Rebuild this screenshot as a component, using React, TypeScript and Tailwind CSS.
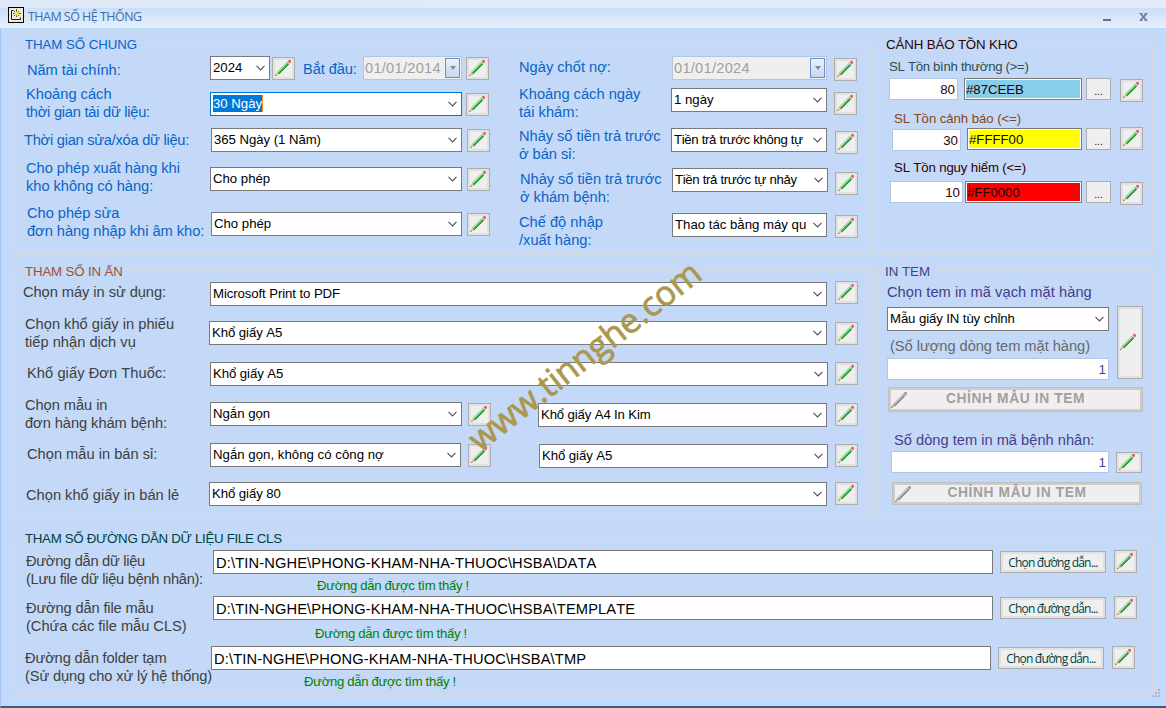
import React from 'react';
import clsx from 'clsx';

type BoxProps = { className?: string; children?: React.ReactNode };

/* Group box with its caption sitting on the top border */
function Group({ title, color, className, children }: BoxProps & { title: string; color: string }) {
  return (
    <fieldset className={clsx('min-w-0 border border-[#d6dbe2]', className)}>
      <legend className={clsx('h-[17px] px-[3px] pt-[2px] text-[13.3px] leading-[15px] whitespace-nowrap', color)}>
        {title}
      </legend>
      {children}
    </fieldset>
  );
}

function Label({ className, children }: BoxProps) {
  return (
    <div className={clsx('shrink-0 whitespace-pre text-[14.67px] leading-[18px]', className)}>{children}</div>
  );
}

function Pencil({ disabled = false }: { disabled?: boolean }) {
  return (
    <svg width="16" height="16" viewBox="0 0 16 16" className="shrink-0">
      <path d="M1.8 12 11.8 2l2.2 2.2-10 10z" fill={disabled ? '#a2a2a2' : '#45b84c'} />
      <path d="M1.8 12 11.8 2l.9.9-10 10z" fill={disabled ? '#cdcdcd' : '#b4e4b4'} />
      <path d="M3.4 13.6 13.4 3.6l.6.6-10 10z" fill={disabled ? '#828282' : '#23882f'} />
      <path d="M11.8 2 12.8 1 15 3.2l-1 1z" fill={disabled ? '#acacac' : '#bcc2c6'} />
      <path d="M12.8 1 13.8 0h1.4l.8.8v1.4l-1 1z" fill={disabled ? '#9a9a9a' : '#dd5c5c'} />
      <path d="M1.8 12 4 14.2.6 15.6z" fill={disabled ? '#a6a6a6' : '#e0ba80'} />
      <path d="M0 16 .8 14.4l1 1z" fill="#4a4a4a" />
    </svg>
  );
}

function EditButton({ className }: BoxProps) {
  return (
    <button
      className={clsx(
        'flex shrink-0 items-center border border-[#adadad] bg-[#efefef] pb-px pl-[2px] shadow-[inset_0_0_0_2px_#e1e1e1]',
        className,
      )}
    >
      <Pencil />
    </button>
  );
}

/* Default square edit button, only the margins change */
function Edit({ className }: BoxProps) {
  return <EditButton className={clsx('h-[23px] w-[23px]', className)} />;
}

function Combo({ className, border = 'border-[#7a7a7a]', children }: BoxProps & { border?: string }) {
  return (
    <div className={clsx('flex h-[24px] shrink-0 items-center border bg-white pr-[4px] pl-[2px] text-[13.2px] leading-[17px] text-black', border, className)}>
      <span className="mb-[2px] min-w-0 flex-1 overflow-hidden whitespace-nowrap">{children}</span>
      <svg width="9" height="6" viewBox="0 0 9 6" className="ml-[4px] shrink-0">
        <path d="M.5 .9 4.5 4.9 8.5 .9" fill="none" stroke="#505050" strokeWidth="1.1" />
      </svg>
    </div>
  );
}

function DateBox({ className, children }: BoxProps) {
  return (
    <div className={clsx('flex h-[24px] shrink-0 items-center border border-[#b1c6e3] bg-[#efefef] pr-px pl-[1px] text-[14.67px] tracking-[0.25px] text-[#a0a0a0]', className)}>
      <span className="flex-1">{children}</span>
      <span className="flex h-[20px] w-[15px] items-center justify-center border border-[#6d8fc2] bg-linear-to-b from-[#e9f1fc] to-[#c5d8f2]">
        <svg width="6" height="4" viewBox="0 0 6 4">
          <path d="M0 0h6L3 4z" fill="#8a8a8a" />
        </svg>
      </span>
    </div>
  );
}

function NumberBox({ className, children }: BoxProps) {
  return (
    <div className={clsx('h-[22px] shrink-0 border border-[#b1c6e3] bg-white pr-[2px] text-right text-[13.33px] leading-[21px]', className)}>
      {children}
    </div>
  );
}

function ColorBox({ className, children }: BoxProps) {
  return (
    <div className={clsx('h-[22px] shrink-0 border border-[#7a7a7a] pl-[1px] text-[13.2px] leading-[21px] text-[#200000] shadow-[inset_0_0_0_1px_#fff]', className)}>
      {children}
    </div>
  );
}

function MoreButton({ className }: BoxProps) {
  return (
    <button className={clsx('h-[22px] w-[25px] shrink-0 border border-[#adadad] bg-[#efefef] pt-[3px] text-[11px] leading-[16px] tracking-[-0.2px] text-[#400000]', className)}>
      ...
    </button>
  );
}

function TemplateButton({ className }: BoxProps) {
  return (
    <button className={clsx('flex shrink-0 items-center border border-[#bfbfbf] bg-[#efefef] pl-[2px] shadow-[inset_0_0_0_2px_#cccccc]', className)}>
      <Pencil disabled />
      <span className="flex-1 pr-[18px] text-center text-[13.8px] font-bold tracking-[0.6px] whitespace-nowrap text-[#a0a0a0]">
        CHỈNH MẪU IN TEM
      </span>
    </button>
  );
}

function PathRow({ label, path, className, labelClass, noteClass }: { label: React.ReactNode; path: string; className: string; labelClass: string; noteClass: string }) {
  return (
    <div className={clsx('flex items-start', className)}>
      <Label className={labelClass}>{label}</Label>
      <div className="w-[780px] shrink-0">
        <div className="h-[24px] border border-[#7a7a7a] bg-white pt-[2px] pl-[2px] text-[14.67px] leading-[21px] tracking-[0.14px] text-black">
          {path}
        </div>
        <div className={clsx('text-[13.1px] leading-[16px] tracking-[-0.29px] text-[#008000]', noteClass)}>Đường dẫn được tìm thấy !</div>
      </div>
      <button className="mt-px ml-[7px] h-[22px] w-[106px] shrink-0 border border-[#adadad] bg-[#efefef] font-['Open_Sans',sans-serif] text-[12px] leading-[17px] tracking-[-0.8px] whitespace-nowrap text-[#004040] shadow-[inset_0_0_0_2px_#e1e1e1]">
        Chọn đường dẫn...
      </button>
      <Edit className="ml-[8px]" />
    </div>
  );
}

function TitleBar() {
  return (
    <header className="flex h-[29px] shrink-0 flex-col border-b border-[#b6d9ef]">
      <div className="h-[8px] bg-linear-to-r from-[#dfe9f7] to-[#e3ebf8]" />
      <div className="flex h-[20px] items-start bg-linear-to-b from-[#cbdff8] to-[#e4f0fe] pl-[8px]">
        <svg width="16" height="16" viewBox="0 0 16 16" className="-mt-px">
          <rect x=".5" y=".5" width="15" height="15" fill="#efe9d9" stroke="#000" />
          <path d="M5.5 3.5h-2v9h9v-2" fill="none" stroke="#14144e" />
          <path d="M8.5 2v8M5 6.5h8M6 4l5 5M11 4 6 9" stroke="#4a4720" strokeWidth=".9" />
          <circle cx="8.7" cy="6.5" r="2.1" fill="#f3ea2c" />
        </svg>
        <h1 className="ml-[4px] flex-1 font-['Open_Sans',sans-serif] text-[12.5px] leading-[17px] tracking-[-0.53px] text-[#3e6aaa]">
          THAM SỐ HỆ THỐNG
        </h1>
        <svg width="48" height="12" viewBox="0 0 48 12" className="mt-[3px] mr-[17px]">
          <path d="M2 8h8v2H2z" fill="#64748b" />
          <path d="M39.5 2.5 45.5 9.5M45.5 2.5 39.5 9.5" stroke="#6b7c97" strokeWidth="1.9" />
          <path d="M38.5 2.5h3M43.5 2.5h3M38.5 9.5h3M43.5 9.5h3" stroke="#6b7c97" />
        </svg>
      </div>
    </header>
  );
}

function GeneralSettings() {
  return (
    <Group title="THAM SỐ CHUNG" color="ml-[6px] tracking-[-0.08px] text-[#0a64c8]" className="h-[220px] w-[856px]">
      <div className="flex text-[#0a64c8]">
        <div className="w-[479px]">
          <div className="flex h-[32px] items-start">
            <Label className="mt-[9px] ml-[11px] w-[183px] tracking-[-0.06px]">Năm tài chính:</Label>
            <Combo className="mt-[4px] w-[60px]">2024</Combo>
            <Edit className="mt-[5px] ml-[2px]" />
            <Label className="mt-[8px] ml-[8px] w-[60px] tracking-[-0.1px]">Bắt đầu:</Label>
            <DateBox className="mt-[4px] w-[99px]">01/01/2014</DateBox>
            <Edit className="mt-[5px] ml-[4px]" />
          </div>
          <div className="flex h-[43px] items-start">
            <Label className="mt-px ml-[10px] w-[184px]">
              Khoảng cách{'\n'}
              <span className="tracking-[-0.25px]">thời gian tải dữ liệu:</span>
            </Label>
            <Combo className="mt-[8px] w-[252px]" border="border-[#0078d7]">
              <span className="inline-block border-r border-[#ff8728] bg-[#0078d7] text-white">30 Ngày</span>
            </Combo>
            <Edit className="mt-[9px] ml-[4px]" />
          </div>
          <div className="flex h-[31px] items-start">
            <Label className="mt-[4px] ml-[8px] w-[187px] tracking-[-0.26px]">Thời gian sửa/xóa dữ liệu:</Label>
            <Combo className="mt-px w-[251px] tracking-[-0.05px]">365 Ngày (1 Năm)</Combo>
            <Edit className="mt-[2px] ml-[5px]" />
          </div>
          <div className="flex h-[45px] items-start">
            <Label className="mt-px ml-[10px] w-[184px] tracking-[-0.04px]">{'Cho phép xuất hàng khi\nkho không có hàng:'}</Label>
            <Combo className="mt-[9px] w-[252px]">Cho phép</Combo>
            <Edit className="mt-[10px] ml-[5px]" />
          </div>
          <div className="flex h-[45px] items-start">
            <Label className="mt-px ml-[11px] w-[184px] tracking-[-0.04px]">{'Cho phép sửa\nđơn hàng nhập khi âm kho:'}</Label>
            <Combo className="mt-[9px] w-[251px]">Cho phép</Combo>
            <Edit className="mt-[10px] ml-[5px]" />
          </div>
        </div>

        <div className="flex-1">
          <div className="flex h-[32px] items-start">
            <Label className="mt-[6px] ml-[24px] w-[153px]">Ngày chốt nợ:</Label>
            <DateBox className="mt-[4px] w-[155px]">01/01/2024</DateBox>
            <Edit className="mt-[6px] ml-[7px]" />
          </div>
          <div className="flex h-[42px] items-start">
            <Label className="mt-px ml-[24px] w-[152px]">{'Khoảng cách ngày\ntái khám:'}</Label>
            <Combo className="mt-[4px] w-[156px]">1 ngày</Combo>
            <Edit className="mt-[8px] ml-[7px]" />
          </div>
          <div className="flex h-[42px] items-start">
            <Label className="mt-px ml-[24px] w-[152px] tracking-[-0.04px]">{'Nhảy số tiền trả trước\nở bán sỉ:'}</Label>
            <Combo className="mt-[2px] w-[156px] tracking-[-0.33px]">Tiền trả trước không tự</Combo>
            <Edit className="mt-[5px] ml-[8px]" />
          </div>
          <div className="flex h-[44px] items-start">
            <Label className="mt-[2px] ml-[25px] w-[152px] tracking-[-0.04px]">{'Nhảy số tiền trả trước\nở khám bệnh:'}</Label>
            <Combo className="w-[156px] tracking-[-0.33px]">Tiền trả trước tự nhảy</Combo>
            <Edit className="mt-[4px] ml-[7px]" />
          </div>
          <div className="flex h-[40px] items-start">
            <Label className="mt-px ml-[24px] w-[153px]">{'Chế độ nhập\n/xuất hàng:'}</Label>
            <Combo className="mt-px w-[155px]">Thao tác bằng máy qu</Combo>
            <Edit className="mt-[3px] ml-[8px]" />
          </div>
        </div>
      </div>
    </Group>
  );
}

function StockWarning() {
  return (
    <Group title="CẢNH BÁO TỒN KHO" color="ml-[5px] tracking-[-0.14px] text-[#300000]" className="ml-[6px] h-[220px] w-[276px]">
      <div className="text-[13.2px] leading-[16px] text-[#300000]">
        <div className="mt-[7px] ml-[11px] h-[19px] tracking-[-0.3px] text-[#2f4f4f]">SL Tồn bình thường (&gt;=)</div>
        <div className="flex h-[33px] items-start">
          <NumberBox className="ml-[11px] w-[69px]">80</NumberBox>
          <ColorBox className="ml-[6px] w-[118px] bg-[#87ceeb]">#87CEEB</ColorBox>
          <MoreButton className="ml-[4px]" />
          <Edit className="mt-px ml-[9px]" />
        </div>
        <div className="ml-[16px] h-[16px] tracking-[-0.06px] text-[#8b4513]">SL Tồn cảnh báo (&lt;=)</div>
        <div className="flex h-[33px] items-start">
          <NumberBox className="mt-[2px] ml-[14px] w-[69px]">30</NumberBox>
          <ColorBox className="mt-px ml-[6px] w-[115px] bg-[#ffff00]">#FFFF00</ColorBox>
          <MoreButton className="mt-px ml-[4px]" />
          <Edit className="ml-[9px]" />
        </div>
        <div className="ml-[16px] h-[21px] tracking-[-0.14px]">SL Tồn nguy hiểm (&lt;=)</div>
        <div className="flex items-start">
          <NumberBox className="ml-[12px] w-[73px]">10</NumberBox>
          <ColorBox className="ml-[2px] w-[117px] bg-[#ff0000]">#FF0000</ColorBox>
          <MoreButton className="ml-[4px]" />
          <Edit className="mt-px ml-[9px]" />
        </div>
      </div>
    </Group>
  );
}

function PrintSettings() {
  return (
    <Group title="THAM SỐ IN ẤN" color="ml-[6px] tracking-[-0.16px] text-[#a0522d]" className="h-[258px] w-[856px]">
      <div className="text-[#404040]">
        <div className="flex h-[35px] items-start">
          <Label className="mt-[4px] ml-[7px] w-[187px] tracking-[-0.06px]">Chọn máy in sử dụng:</Label>
          <Combo className="mt-[3px] w-[617px] tracking-[-0.09px]">Microsoft Print to PDF</Combo>
          <Edit className="mt-[2px] ml-[8px]" />
        </div>
        <div className="flex h-[47px] items-start">
          <Label className="mt-px ml-[9px] w-[184px]">{'Chọn khổ giấy in phiếu\ntiếp nhận dịch vụ'}</Label>
          <Combo className="mt-[7px] w-[618px] tracking-[-0.07px]">Khổ giấy A5</Combo>
          <Edit className="mt-[8px] ml-[8px]" />
        </div>
        <div className="flex h-[34px] items-start">
          <Label className="mt-[3px] ml-[11px] w-[183px] tracking-[0.06px]">Khổ giấy Đơn Thuốc:</Label>
          <Combo className="mt-px w-[618px] tracking-[-0.07px]">Khổ giấy A5</Combo>
          <Edit className="mt-px ml-[7px]" />
        </div>
        <div className="flex h-[45px] items-start">
          <Label className="mt-px ml-[9px] w-[185px] tracking-[-0.06px]">{'Chọn mẫu in\nđơn hàng khám bệnh:'}</Label>
          <Combo className="mt-[7px] w-[252px]">Ngắn gọn</Combo>
          <Edit className="mt-[8px] ml-[6px]" />
          <Combo className="mt-[8px] ml-[47px] w-[289px] tracking-[-0.14px]">Khổ giấy A4 In Kim</Combo>
          <Edit className="mt-[8px] ml-[8px]" />
        </div>
        <div className="flex h-[40px] items-start">
          <Label className="mt-[5px] ml-[11px] w-[183px]">Chọn mẫu in bán sỉ:</Label>
          <Combo className="mt-[3px] w-[251px] tracking-[0.03px]">Ngắn gọn, không có công nợ</Combo>
          <Edit className="mt-[4px] ml-[7px]" />
          <Combo className="mt-[4px] ml-[48px] w-[289px] tracking-[-0.07px]">Khổ giấy A5</Combo>
          <Edit className="mt-[4px] ml-[7px]" />
        </div>
        <div className="flex items-start">
          <Label className="mt-[6px] ml-[10px] w-[183px]">Chọn khổ giấy in bán lẻ</Label>
          <Combo className="mt-[2px] w-[618px] tracking-[-0.07px]">Khổ giấy 80</Combo>
          <Edit className="mt-[2px] ml-[8px]" />
        </div>
      </div>
    </Group>
  );
}

function LabelPrinting() {
  return (
    <Group title="IN TEM" color="ml-[5px] text-[#483d8b]" className="ml-[5px] h-[258px] w-[277px]">
      <div className="text-[#483d8b]">
        <Label className="mt-[4px] ml-[10px] h-[23px] tracking-[0.04px]">Chọn tem in mã vạch mặt hàng</Label>
        <div className="flex h-[81px] items-start">
          <div className="ml-[10px] w-[222px]">
            <Combo className="mt-px tracking-[-0.1px]">Mẫu giấy IN tùy chỉnh</Combo>
            <Label className="mt-[6px] ml-[3px] h-[21px] tracking-[-0.04px] text-[#696969]">(Số lượng dòng tem mặt hàng)</Label>
            <NumberBox>1</NumberBox>
          </div>
          <EditButton className="ml-[8px] h-[73px] w-[26px]" />
        </div>
        <TemplateButton className="ml-[11px] h-[25px] w-[255px]" />
        <Label className="mt-[19px] ml-[17px] h-[20px]">Số dòng tem in mã bệnh nhân:</Label>
        <div className="flex h-[31px] items-start">
          <NumberBox className="ml-[14px] w-[218px]">1</NumberBox>
          <EditButton className="mt-px ml-[7px] h-[21px] w-[26px]" />
        </div>
        <TemplateButton className="ml-[15px] h-[23px] w-[250px]" />
      </div>
    </Group>
  );
}

function FilePaths() {
  return (
    <Group title="THAM SỐ ĐƯỜNG DẪN DỮ LIỆU FILE CLS" color="ml-[6px] tracking-[-0.32px] text-[#004040]" className="mt-[9px] h-[166px] w-[1138px]">
      <div className="text-[#404040]">
        <PathRow
          label={'Đường dẫn dữ liệu\n(Lưu file dữ liệu bệnh nhân):'}
          path="D:\TIN-NGHE\PHONG-KHAM-NHA-THUOC\HSBA\DATA"
          className="mt-[4px] h-[46px]"
          labelClass="mt-[2px] ml-[10px] w-[187px] tracking-[-0.28px]"
          noteClass="mt-[4px] ml-[104px]"
        />
        <PathRow
          label={
            <>
              <span className="tracking-[-0.15px]">Đường dẫn file mẫu</span>
              {'\n(Chứa các file mẫu CLS)'}
            </>
          }
          path="D:\TIN-NGHE\PHONG-KHAM-NHA-THUOC\HSBA\TEMPLATE"
          className="h-[50px]"
          labelClass="mt-[3px] ml-[10px] w-[187px] tracking-[-0.03px]"
          noteClass="mt-[6px] ml-[102px]"
        />
        <PathRow
          label={'Đường dẫn folder tạm\n(Sử dụng cho xử lý hệ thống)'}
          path="D:\TIN-NGHE\PHONG-KHAM-NHA-THUOC\HSBA\TMP"
          className="h-[44px]"
          labelClass="mt-[3px] ml-[9px] w-[186px] tracking-[-0.13px]"
          noteClass="mt-[4px] ml-[93px]"
        />
      </div>
    </Group>
  );
}

export default function App() {
  return (
    <div className="relative flex h-[708px] w-[1166px] flex-col overflow-hidden bg-[#bfdbff] font-['Liberation_Sans',Arial,sans-serif] [font-kerning:none]">
      <TitleBar />
      <div className="flex flex-1 border-b-2 border-l border-[#a9c4e8] border-b-[#45597a] px-[6px] pb-[6px]">
        <main className="flex-1 bg-[#c3d9f7] pt-[6px] pl-[8px]">
          <div className="flex">
            <GeneralSettings />
            <StockWarning />
          </div>
          <div className="mt-[7px] flex">
            <PrintSettings />
            <LabelPrinting />
          </div>
          <FilePaths />
        </main>
      </div>

      {/* Resize grip */}
      <svg width="9" height="9" viewBox="0 0 9 9" className="absolute right-[5px] bottom-[10px]">
        <path d="M6 0h2v2H6zM3 3h2v2H3zM6 3h2v2H6zM0 6h2v2H0zM3 6h2v2H3zM6 6h2v2H6z" fill="#b4b9c2" />
      </svg>

      {/* Watermark */}
      <div className="pointer-events-none absolute top-[335px] left-[444px] flex h-[40px] w-[280px] -rotate-38 items-center justify-center font-['Open_Sans',sans-serif] text-[34px] leading-[40px] tracking-[-0.1px] whitespace-nowrap text-[#ab9850] [-webkit-text-stroke:0.8px_#ab9850]">
        www.tinnghe.com
      </div>
    </div>
  );
}
